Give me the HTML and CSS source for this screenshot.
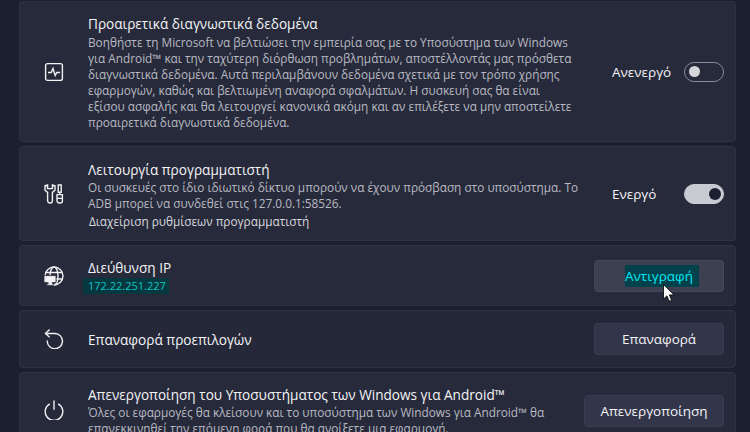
FILE: index.html
```html
<!DOCTYPE html>
<html lang="el">
<head>
  <meta charset="UTF-8">
  <title>Υποσύστημα των Windows για Android</title>
  <link rel="stylesheet" href="styles.css">
</head>
<body>
  <div class="list">

    <div class="card card-diag">
      <svg class="icon" viewBox="0 0 20 20"><rect x="1.6" y="1.6" width="16.8" height="16.8" rx="2"/><path d="M4 10.5h3.2l1.8-4 2.2 7 1.6-3h3.2"/></svg>
      <div class="text">
        <div class="title">Προαιρετικά διαγνωστικά δεδομένα</div>
        <div class="desc">Βοηθήστε τη Microsoft να βελτιώσει την εμπειρία σας με το Υποσύστημα των Windows<br>για Android™ και την ταχύτερη διόρθωση προβλημάτων, αποστέλλοντάς μας πρόσθετα<br>διαγνωστικά δεδομένα. Αυτά περιλαμβάνουν δεδομένα σχετικά με τον τρόπο χρήσης<br>εφαρμογών, καθώς και βελτιωμένη αναφορά σφαλμάτων. Η συσκευή σας θα είναι<br>εξίσου ασφαλής και θα λειτουργεί κανονικά ακόμη και αν επιλέξετε να μην αποστείλετε<br>προαιρετικά διαγνωστικά δεδομένα.</div>
      </div>
      <div class="control">
        <span class="state">Ανενεργό</span>
        <span class="toggle"><span class="knob"></span></span>
      </div>
    </div>

    <div class="card card-dev">
      <svg class="icon" viewBox="0 0 20 20"><path d="M1 1.8v4.4l2.6 2.2v8.4a2.2 2.2 0 0 0 2.2 2.2h.4a2.2 2.2 0 0 0 2.2-2.2V8.4L11 6.2V1.8L8.4 1v3.6H3.6V1z"/><path d="M14.2 1h3v7.2h-3zM15.7 8.2v2.4M13 10.6h5.4v6.2a2.2 2.2 0 0 1-2.2 2.2h-1a2.2 2.2 0 0 1-2.2-2.2zM13 14.4h5.4"/></svg>
      <div class="text">
        <div class="title">Λειτουργία προγραμματιστή</div>
        <div class="desc">Οι συσκευές στο ίδιο ιδιωτικό δίκτυο μπορούν να έχουν πρόσβαση στο υποσύστημα. Το<br>ADB μπορεί να συνδεθεί στις 127.0.0.1:58526.</div>
        <div class="link">Διαχείριση ρυθμίσεων προγραμματιστή</div>
      </div>
      <div class="control">
        <span class="state">Ενεργό</span>
        <span class="toggle on"><span class="knob"></span></span>
      </div>
    </div>

    <div class="card card-ip">
      <svg class="icon" viewBox="0 0 20 20"><circle cx="10" cy="10" r="9"/><ellipse cx="10" cy="10" rx="4" ry="9"/><path d="M1.5 6.5h17M1.5 13h17"/><path class="fill" d="M0 9.6h12v7H8.2v1.2h1.4v1.6H2.8v-1.6h1.4v-1.2H0z"/></svg>
      <div class="text">
        <div class="title">Διεύθυνση IP</div>
        <div class="desc"><span class="selected-ip">172.22.251.227</span></div>
      </div>
      <button class="btn btn-hover"><span class="selected">Αντιγραφή</span></button>
    </div>

    <div class="card card-reset">
      <svg class="icon" viewBox="0 0 20 20"><path d="M1.5 4.5H11a7.6 7.6 0 1 1-7.7 7"/><path d="M5.6 0.6 1.5 4.5l4.1 3.8"/></svg>
      <div class="text">
        <div class="title">Επαναφορά προεπιλογών</div>
      </div>
      <button class="btn">Επαναφορά</button>
    </div>

    <div class="card card-off">
      <svg class="icon" viewBox="0 0 20 20"><path d="M10 0.4v9.4"/><path d="M5.8 3.9a8.8 8.8 0 1 0 8.4 0"/></svg>
      <div class="text">
        <div class="title">Απενεργοποίηση του Υποσυστήματος των Windows για Android™</div>
        <div class="desc">Όλες οι εφαρμογές θα κλείσουν και το υποσύστημα των Windows για Android™ θα<br>επανεκκινηθεί την επόμενη φορά που θα ανοίξετε μια εφαρμογή.</div>
      </div>
      <button class="btn btn-wide">Απενεργοποίηση</button>
    </div>

  </div>

  <!-- mouse pointer over the copy button -->
  <svg class="cursor" viewBox="0 0 12 18"><path d="M0.5 0.5v14.5l3.4-3.2 2.3 5.4 2.4-1-2.3-5.3h4.7z"/></svg>
</body>
</html>
```

FILE: styles.css
```css
* { box-sizing: border-box; margin: 0; padding: 0; }

html, body { height: 100%; }

body {
  overflow: hidden;
  position: relative;
  background: #1b1f2f;
  color: #fff;
  font-family: "Open Sans", "Noto Sans", sans-serif;
}

.list {
  display: flex;
  flex-direction: column;
  gap: 4px;
  padding: 1px 14px 0 19px;
}

/* Setting rows */
.card {
  display: flex;
  align-items: center;
  flex-shrink: 0;
  padding-left: 24px;
  padding-right: 11px;
  background: #272a3b;
  border: 1px solid #30333f;
  border-radius: 4px;
}
.card-diag { height: 141px; }
.card-diag .text { padding-top: 1px; }
.card-diag .title { margin-bottom: 1px; }
.card-dev { height: 95px; }
.card-dev .text { padding-top: 3px; }
.card-ip { height: 61px; }
.card-ip .text { padding-top: 2px; }
.card-reset { height: 58px; background: #252839; }
.card-reset .text { padding-top: 2px; }
.card-off { height: 74px; align-items: flex-start; padding-top: 13px; }

.icon {
  flex: 0 0 20px;
  width: 20px;
  height: 20px;
  margin-right: 24px;
  fill: none;
  stroke: #f2f2f4;
  stroke-width: 1.4;
}
.icon .fill { fill: #f2f2f4; stroke: #272a3b; stroke-width: 0.8; }
.card-off .icon { margin-top: 14px; }

.text { flex: 1; min-width: 0; }

.title {
  font-size: 13.6px;
  line-height: 18px;
  color: #f4f4f6;
  white-space: nowrap;
}
.desc {
  font-size: 11.8px;
  line-height: 16px;
  color: #b9bac2;
  white-space: nowrap;
}
.link {
  margin-top: 2px;
  font-size: 11.8px;
  line-height: 17px;
  color: #d8d9de;
  padding-left: 1px;
}

/* Selected text */
.selected-ip {
  display: inline-block;
  margin-left: -5px;
  padding: 0 3px 0 5px;
  font-size: 11px;
  background: #06383f;
  color: #12c4c4;
}
.selected {
  margin-left: 6px;
  padding: 2px 6px 2px 0;
  background: #03424d;
  color: #00e8f0;
}

/* Toggles */
.control {
  display: flex;
  align-items: center;
  flex: 0 0 112px;
}
.state {
  flex: 1;
  font-size: 13.5px;
  color: #f4f4f6;
}
.toggle {
  display: flex;
  align-items: center;
  width: 40px;
  height: 20px;
  padding: 0 4px;
  border: 1px solid #8c8d96;
  border-radius: 10px;
}
.knob {
  width: 11px;
  height: 11px;
  border-radius: 50%;
  background: #d5d5db;
}
.toggle.on {
  justify-content: flex-end;
  background: #c9c9d1;
  border-color: #c9c9d1;
  padding: 0 2px;
}
.toggle.on .knob {
  width: 12px;
  height: 12px;
  background: #1b1f2f;
}

/* Buttons */
.btn {
  flex: 0 0 130px;
  height: 32px;
  background: #33364a;
  border: 1px solid #3a3d4e;
  border-radius: 4px;
  color: #f4f4f6;
  font: 13.5px "Open Sans", "Noto Sans", sans-serif;
}
.btn-hover { background: #3d4050; border-color: #45485a; }
.btn-wide { flex-basis: 140px; margin-top: 9px; }

.cursor {
  position: absolute;
  left: 663px;
  top: 284px;
  width: 12px;
  height: 18px;
  fill: #fff;
  stroke: #000;
  stroke-width: 0.8;
}
```
